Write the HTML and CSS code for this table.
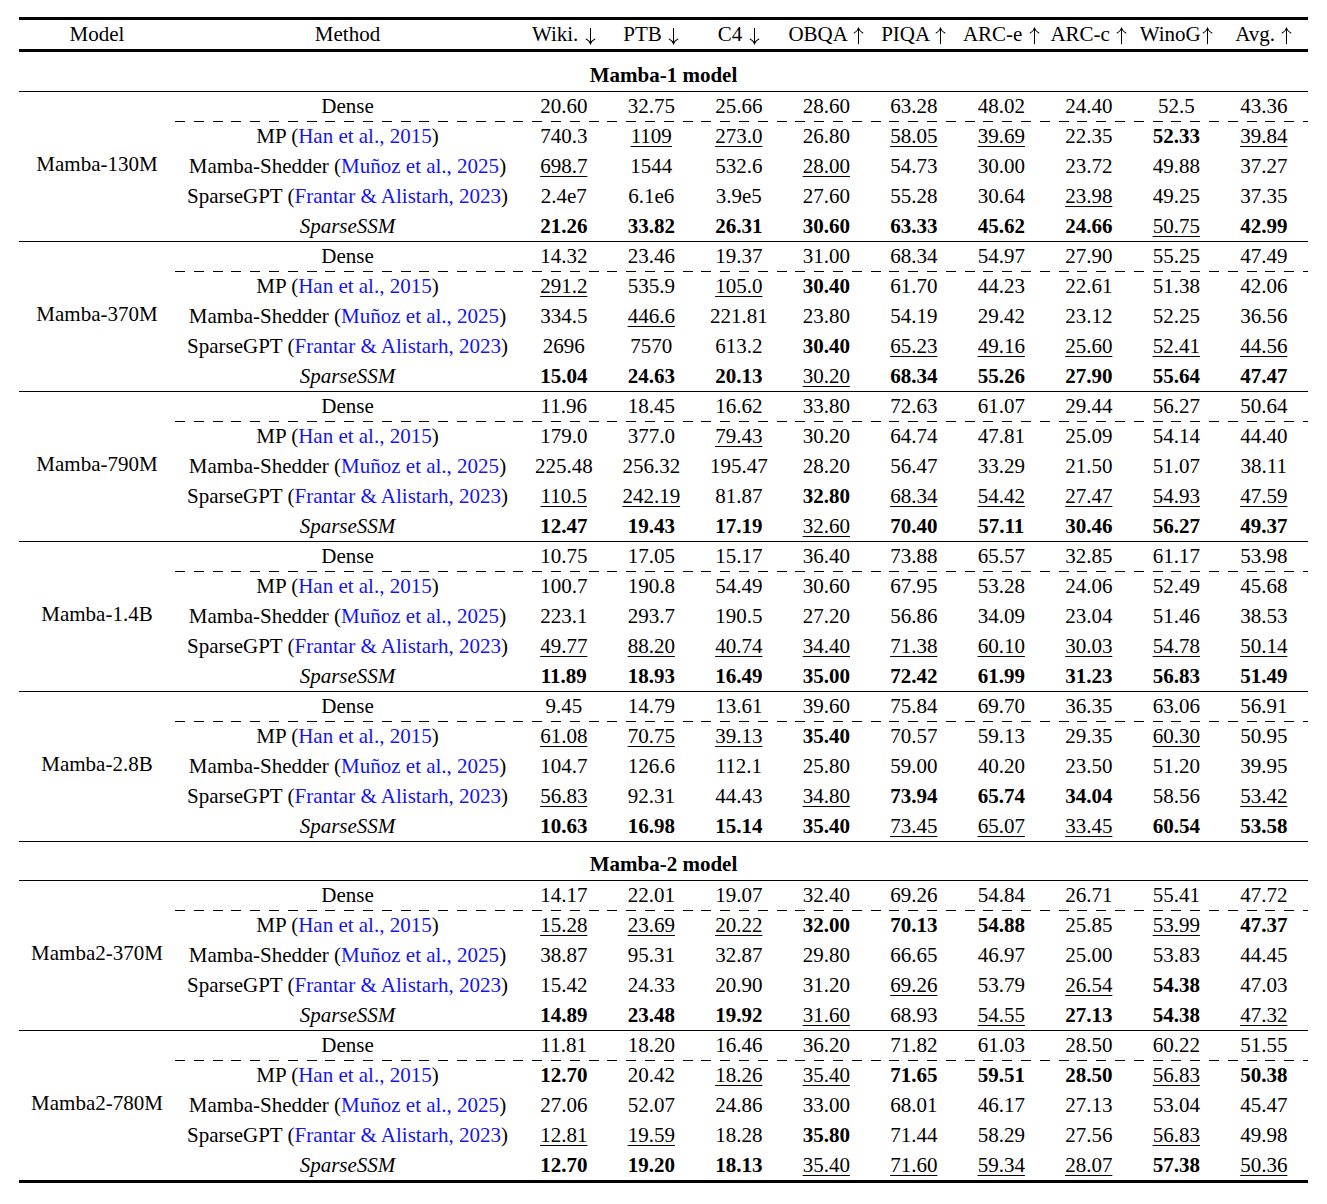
FILE: index.html
```html
<!DOCTYPE html>
<html>
<head>
<meta charset="utf-8">
<link rel="stylesheet" href="styles.css">
</head>
<body>
<div class="tbl">
  <div class="hdr">
    <div class="c">Model</div>
    <div class="c">Method</div>
    <div class="c">Wiki. <svg class="arr" viewBox="0 0 12 18"><path d="M6 0.5V17.2M1.2 12.2Q4.6 13.8 6 17.6Q7.4 13.8 10.8 12.2"/></svg></div>
    <div class="c">PTB <svg class="arr" viewBox="0 0 12 18"><path d="M6 0.5V17.2M1.2 12.2Q4.6 13.8 6 17.6Q7.4 13.8 10.8 12.2"/></svg></div>
    <div class="c">C4 <svg class="arr" viewBox="0 0 12 18"><path d="M6 0.5V17.2M1.2 12.2Q4.6 13.8 6 17.6Q7.4 13.8 10.8 12.2"/></svg></div>
    <div class="c">OBQA <svg class="arr" viewBox="0 0 12 18"><path d="M6 17.5V0.8M1.2 5.8Q4.6 4.2 6 0.4Q7.4 4.2 10.8 5.8"/></svg></div>
    <div class="c">PIQA <svg class="arr" viewBox="0 0 12 18"><path d="M6 17.5V0.8M1.2 5.8Q4.6 4.2 6 0.4Q7.4 4.2 10.8 5.8"/></svg></div>
    <div class="c">ARC-e <svg class="arr" viewBox="0 0 12 18"><path d="M6 17.5V0.8M1.2 5.8Q4.6 4.2 6 0.4Q7.4 4.2 10.8 5.8"/></svg></div>
    <div class="c">ARC-c <svg class="arr" viewBox="0 0 12 18"><path d="M6 17.5V0.8M1.2 5.8Q4.6 4.2 6 0.4Q7.4 4.2 10.8 5.8"/></svg></div>
    <div class="c">WinoG<svg class="arr" viewBox="0 0 12 18"><path d="M6 17.5V0.8M1.2 5.8Q4.6 4.2 6 0.4Q7.4 4.2 10.8 5.8"/></svg></div>
    <div class="c">Avg. <svg class="arr" viewBox="0 0 12 18"><path d="M6 17.5V0.8M1.2 5.8Q4.6 4.2 6 0.4Q7.4 4.2 10.8 5.8"/></svg></div>
  </div>

  <div class="section">Mamba-1 model</div>

  <div class="group">
    <div class="model">Mamba-130M</div>
    <div class="rows">
      <div class="row"><div class="m">Dense</div><div>20.60</div><div>32.75</div><div>25.66</div><div>28.60</div><div>63.28</div><div>48.02</div><div>24.40</div><div>52.5</div><div>43.36</div></div>
      <div class="rest">
        <div class="row"><div class="m">MP (<span class="cite">Han et al., 2015</span>)</div><div>740.3</div><div><span class="u">1109</span></div><div><span class="u">273.0</span></div><div>26.80</div><div><span class="u">58.05</span></div><div><span class="u">39.69</span></div><div>22.35</div><div><b>52.33</b></div><div><span class="u">39.84</span></div></div>
        <div class="row"><div class="m">Mamba-Shedder (<span class="cite">Muñoz et al., 2025</span>)</div><div><span class="u">698.7</span></div><div>1544</div><div>532.6</div><div><span class="u">28.00</span></div><div>54.73</div><div>30.00</div><div>23.72</div><div>49.88</div><div>37.27</div></div>
        <div class="row"><div class="m">SparseGPT (<span class="cite">Frantar &amp; Alistarh, 2023</span>)</div><div>2.4e7</div><div>6.1e6</div><div>3.9e5</div><div>27.60</div><div>55.28</div><div>30.64</div><div><span class="u">23.98</span></div><div>49.25</div><div>37.35</div></div>
        <div class="row"><div class="m"><i>SparseSSM</i></div><div><b>21.26</b></div><div><b>33.82</b></div><div><b>26.31</b></div><div><b>30.60</b></div><div><b>63.33</b></div><div><b>45.62</b></div><div><b>24.66</b></div><div><span class="u">50.75</span></div><div><b>42.99</b></div></div>
      </div>
    </div>
  </div>

  <div class="group">
    <div class="model">Mamba-370M</div>
    <div class="rows">
      <div class="row"><div class="m">Dense</div><div>14.32</div><div>23.46</div><div>19.37</div><div>31.00</div><div>68.34</div><div>54.97</div><div>27.90</div><div>55.25</div><div>47.49</div></div>
      <div class="rest">
        <div class="row"><div class="m">MP (<span class="cite">Han et al., 2015</span>)</div><div><span class="u">291.2</span></div><div>535.9</div><div><span class="u">105.0</span></div><div><b>30.40</b></div><div>61.70</div><div>44.23</div><div>22.61</div><div>51.38</div><div>42.06</div></div>
        <div class="row"><div class="m">Mamba-Shedder (<span class="cite">Muñoz et al., 2025</span>)</div><div>334.5</div><div><span class="u">446.6</span></div><div>221.81</div><div>23.80</div><div>54.19</div><div>29.42</div><div>23.12</div><div>52.25</div><div>36.56</div></div>
        <div class="row"><div class="m">SparseGPT (<span class="cite">Frantar &amp; Alistarh, 2023</span>)</div><div>2696</div><div>7570</div><div>613.2</div><div><b>30.40</b></div><div><span class="u">65.23</span></div><div><span class="u">49.16</span></div><div><span class="u">25.60</span></div><div><span class="u">52.41</span></div><div><span class="u">44.56</span></div></div>
        <div class="row"><div class="m"><i>SparseSSM</i></div><div><b>15.04</b></div><div><b>24.63</b></div><div><b>20.13</b></div><div><span class="u">30.20</span></div><div><b>68.34</b></div><div><b>55.26</b></div><div><b>27.90</b></div><div><b>55.64</b></div><div><b>47.47</b></div></div>
      </div>
    </div>
  </div>

  <div class="group">
    <div class="model">Mamba-790M</div>
    <div class="rows">
      <div class="row"><div class="m">Dense</div><div>11.96</div><div>18.45</div><div>16.62</div><div>33.80</div><div>72.63</div><div>61.07</div><div>29.44</div><div>56.27</div><div>50.64</div></div>
      <div class="rest">
        <div class="row"><div class="m">MP (<span class="cite">Han et al., 2015</span>)</div><div>179.0</div><div>377.0</div><div><span class="u">79.43</span></div><div>30.20</div><div>64.74</div><div>47.81</div><div>25.09</div><div>54.14</div><div>44.40</div></div>
        <div class="row"><div class="m">Mamba-Shedder (<span class="cite">Muñoz et al., 2025</span>)</div><div>225.48</div><div>256.32</div><div>195.47</div><div>28.20</div><div>56.47</div><div>33.29</div><div>21.50</div><div>51.07</div><div>38.11</div></div>
        <div class="row"><div class="m">SparseGPT (<span class="cite">Frantar &amp; Alistarh, 2023</span>)</div><div><span class="u">110.5</span></div><div><span class="u">242.19</span></div><div>81.87</div><div><b>32.80</b></div><div><span class="u">68.34</span></div><div><span class="u">54.42</span></div><div><span class="u">27.47</span></div><div><span class="u">54.93</span></div><div><span class="u">47.59</span></div></div>
        <div class="row"><div class="m"><i>SparseSSM</i></div><div><b>12.47</b></div><div><b>19.43</b></div><div><b>17.19</b></div><div><span class="u">32.60</span></div><div><b>70.40</b></div><div><b>57.11</b></div><div><b>30.46</b></div><div><b>56.27</b></div><div><b>49.37</b></div></div>
      </div>
    </div>
  </div>

  <div class="group">
    <div class="model">Mamba-1.4B</div>
    <div class="rows">
      <div class="row"><div class="m">Dense</div><div>10.75</div><div>17.05</div><div>15.17</div><div>36.40</div><div>73.88</div><div>65.57</div><div>32.85</div><div>61.17</div><div>53.98</div></div>
      <div class="rest">
        <div class="row"><div class="m">MP (<span class="cite">Han et al., 2015</span>)</div><div>100.7</div><div>190.8</div><div>54.49</div><div>30.60</div><div>67.95</div><div>53.28</div><div>24.06</div><div>52.49</div><div>45.68</div></div>
        <div class="row"><div class="m">Mamba-Shedder (<span class="cite">Muñoz et al., 2025</span>)</div><div>223.1</div><div>293.7</div><div>190.5</div><div>27.20</div><div>56.86</div><div>34.09</div><div>23.04</div><div>51.46</div><div>38.53</div></div>
        <div class="row"><div class="m">SparseGPT (<span class="cite">Frantar &amp; Alistarh, 2023</span>)</div><div><span class="u">49.77</span></div><div><span class="u">88.20</span></div><div><span class="u">40.74</span></div><div><span class="u">34.40</span></div><div><span class="u">71.38</span></div><div><span class="u">60.10</span></div><div><span class="u">30.03</span></div><div><span class="u">54.78</span></div><div><span class="u">50.14</span></div></div>
        <div class="row"><div class="m"><i>SparseSSM</i></div><div><b>11.89</b></div><div><b>18.93</b></div><div><b>16.49</b></div><div><b>35.00</b></div><div><b>72.42</b></div><div><b>61.99</b></div><div><b>31.23</b></div><div><b>56.83</b></div><div><b>51.49</b></div></div>
      </div>
    </div>
  </div>

  <div class="group">
    <div class="model">Mamba-2.8B</div>
    <div class="rows">
      <div class="row"><div class="m">Dense</div><div>9.45</div><div>14.79</div><div>13.61</div><div>39.60</div><div>75.84</div><div>69.70</div><div>36.35</div><div>63.06</div><div>56.91</div></div>
      <div class="rest">
        <div class="row"><div class="m">MP (<span class="cite">Han et al., 2015</span>)</div><div><span class="u">61.08</span></div><div><span class="u">70.75</span></div><div><span class="u">39.13</span></div><div><b>35.40</b></div><div>70.57</div><div>59.13</div><div>29.35</div><div><span class="u">60.30</span></div><div>50.95</div></div>
        <div class="row"><div class="m">Mamba-Shedder (<span class="cite">Muñoz et al., 2025</span>)</div><div>104.7</div><div>126.6</div><div>112.1</div><div>25.80</div><div>59.00</div><div>40.20</div><div>23.50</div><div>51.20</div><div>39.95</div></div>
        <div class="row"><div class="m">SparseGPT (<span class="cite">Frantar &amp; Alistarh, 2023</span>)</div><div><span class="u">56.83</span></div><div>92.31</div><div>44.43</div><div><span class="u">34.80</span></div><div><b>73.94</b></div><div><b>65.74</b></div><div><b>34.04</b></div><div>58.56</div><div><span class="u">53.42</span></div></div>
        <div class="row"><div class="m"><i>SparseSSM</i></div><div><b>10.63</b></div><div><b>16.98</b></div><div><b>15.14</b></div><div><b>35.40</b></div><div><span class="u">73.45</span></div><div><span class="u">65.07</span></div><div><span class="u">33.45</span></div><div><b>60.54</b></div><div><b>53.58</b></div></div>
      </div>
    </div>
  </div>

  <div class="section ruled">Mamba-2 model</div>

  <div class="group">
    <div class="model">Mamba2-370M</div>
    <div class="rows">
      <div class="row"><div class="m">Dense</div><div>14.17</div><div>22.01</div><div>19.07</div><div>32.40</div><div>69.26</div><div>54.84</div><div>26.71</div><div>55.41</div><div>47.72</div></div>
      <div class="rest">
        <div class="row"><div class="m">MP (<span class="cite">Han et al., 2015</span>)</div><div><span class="u">15.28</span></div><div><span class="u">23.69</span></div><div><span class="u">20.22</span></div><div><b>32.00</b></div><div><b>70.13</b></div><div><b>54.88</b></div><div>25.85</div><div><span class="u">53.99</span></div><div><b>47.37</b></div></div>
        <div class="row"><div class="m">Mamba-Shedder (<span class="cite">Muñoz et al., 2025</span>)</div><div>38.87</div><div>95.31</div><div>32.87</div><div>29.80</div><div>66.65</div><div>46.97</div><div>25.00</div><div>53.83</div><div>44.45</div></div>
        <div class="row"><div class="m">SparseGPT (<span class="cite">Frantar &amp; Alistarh, 2023</span>)</div><div>15.42</div><div>24.33</div><div>20.90</div><div>31.20</div><div><span class="u">69.26</span></div><div>53.79</div><div><span class="u">26.54</span></div><div><b>54.38</b></div><div>47.03</div></div>
        <div class="row"><div class="m"><i>SparseSSM</i></div><div><b>14.89</b></div><div><b>23.48</b></div><div><b>19.92</b></div><div><span class="u">31.60</span></div><div>68.93</div><div><span class="u">54.55</span></div><div><b>27.13</b></div><div><b>54.38</b></div><div><span class="u">47.32</span></div></div>
      </div>
    </div>
  </div>

  <div class="group">
    <div class="model">Mamba2-780M</div>
    <div class="rows">
      <div class="row"><div class="m">Dense</div><div>11.81</div><div>18.20</div><div>16.46</div><div>36.20</div><div>71.82</div><div>61.03</div><div>28.50</div><div>60.22</div><div>51.55</div></div>
      <div class="rest">
        <div class="row"><div class="m">MP (<span class="cite">Han et al., 2015</span>)</div><div><b>12.70</b></div><div>20.42</div><div><span class="u">18.26</span></div><div><span class="u">35.40</span></div><div><b>71.65</b></div><div><b>59.51</b></div><div><b>28.50</b></div><div><span class="u">56.83</span></div><div><b>50.38</b></div></div>
        <div class="row"><div class="m">Mamba-Shedder (<span class="cite">Muñoz et al., 2025</span>)</div><div>27.06</div><div>52.07</div><div>24.86</div><div>33.00</div><div>68.01</div><div>46.17</div><div>27.13</div><div>53.04</div><div>45.47</div></div>
        <div class="row"><div class="m">SparseGPT (<span class="cite">Frantar &amp; Alistarh, 2023</span>)</div><div><span class="u">12.81</span></div><div><span class="u">19.59</span></div><div>18.28</div><div><b>35.80</b></div><div>71.44</div><div>58.29</div><div>27.56</div><div><span class="u">56.83</span></div><div>49.98</div></div>
        <div class="row"><div class="m"><i>SparseSSM</i></div><div><b>12.70</b></div><div><b>19.20</b></div><div><b>18.13</b></div><div><span class="u">35.40</span></div><div><span class="u">71.60</span></div><div><span class="u">59.34</span></div><div><span class="u">28.07</span></div><div><b>57.38</b></div><div><span class="u">50.36</span></div></div>
      </div>
    </div>
  </div>
</div>
</body>
</html>
```

FILE: styles.css
```css
html, body {
  margin: 0;
  padding: 0;
  background: #fff;
}

body {
  font-family: "Liberation Serif", "Times New Roman", serif;
  font-size: 21px;
  color: #000;
}

.tbl {
  width: 1289px;
  margin: 17px 0 0 19px;
  border-bottom: 3px solid #000;
}

.hdr {
  display: grid;
  grid-template-columns: 156px 345px repeat(9, 87.5px);
  height: 29px;
  line-height: 29px;
  border-top: 3px solid #000;
  border-bottom: 3px solid #000;
  text-align: center;
  white-space: nowrap;
}

.arr {
  width: 11px;
  height: 18px;
  vertical-align: -4px;
  fill: none;
  stroke: #000;
  stroke-width: 1.1;
  stroke-linecap: round;
  margin-left: 1px;
}

.section {
  height: 39px;
  box-sizing: border-box;
  padding-top: 8px;
  line-height: 30px;
  text-align: center;
  font-weight: bold;
}

.section.ruled {
  background: linear-gradient(#000, #000) top left / 100% 1px no-repeat;
}

.group {
  display: flex;
  background: linear-gradient(#000, #000) top left / 100% 1px no-repeat;
}

.model {
  width: 156px;
  flex: none;
  display: flex;
  align-items: center;
  justify-content: center;
  white-space: nowrap;
  padding-bottom: 4px;
  box-sizing: border-box;
}

.rows {
  flex: 1;
}

.rest {
  background: repeating-linear-gradient(to right, #000 0 10px, transparent 10px 18.8px) top left / 100% 1px no-repeat;
}

.row {
  display: grid;
  grid-template-columns: 345px repeat(9, 87.5px);
  height: 30px;
  line-height: 30px;
  text-align: center;
  white-space: nowrap;
}

.m {
  text-align: center;
}

.cite {
  color: #1414f5;
}

.u {
  text-decoration: underline;
  text-decoration-thickness: 1px;
  text-underline-offset: 3px;
}

b {
  font-weight: bold;
}
```
